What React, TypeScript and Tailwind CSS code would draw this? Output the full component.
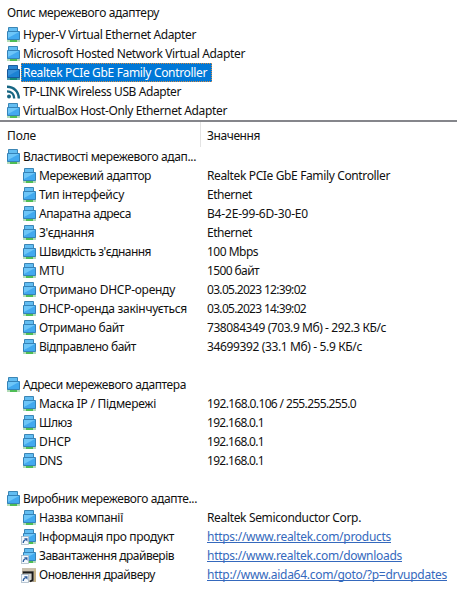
import { useLayoutEffect, useRef } from "react";

type Icon = "net" | "selected" | "wifi" | "link" | "aida";
type Row = { icon: Icon; label: string; w: number; group?: boolean; value?: string; vw?: number; link?: boolean };

function Label({ text, w, className = "" }: { text: string; w: number; className?: string }) {
  const ref = useRef<HTMLSpanElement>(null);
  useLayoutEffect(() => {
    const el = ref.current;
    if (!el) return;
    el.style.letterSpacing = "0px";
    const natural = el.getBoundingClientRect().width;
    el.style.letterSpacing = `${(w - natural) / text.length}px`;
  }, [text, w]);
  return <span ref={ref} className={`shrink-0 whitespace-pre ${className}`}>{text}</span>;
}

function Shortcut() {
  return (
    <g>
      <rect x=".5" y="7.5" width="7" height="8" fill="#f4f8fd" stroke="#a9b8c6" strokeWidth=".8" />
      <path d="M2.2 14c0-2 .8-2.8 2.4-3.4" fill="none" stroke="#2c5d9e" strokeWidth="1.3" />
      <path d="M3 9.3h3.5v3.5z" fill="#2c5d9e" />
    </g>
  );
}

function DeviceIcon({ kind }: { kind: Icon }) {
  if (kind === "wifi")
    return (
      <svg viewBox="0 0 16 16" className="size-4 shrink-0" fill="none" stroke="#176683" strokeWidth="2.4">
        <circle cx="4" cy="12.4" r="2" fill="#176683" stroke="none" />
        <path d="M2 7.4c4.3 0 7.2 2.9 7.2 7.2M2 2.8c7 0 11.8 4.8 11.8 11.8" />
      </svg>
    );
  if (kind === "aida")
    return (
      <svg viewBox="0 0 16 16" className="size-4 shrink-0">
        <path d="M1 1h14v14H1z" fill="#9c9588" />
        <path d="M1 1h14v3H1z" fill="#c9c0ae" />
        <path d="M2 5.5h9.5V13L9 14.5" fill="#d4d4d0" stroke="#1b1b1b" strokeWidth="1.8" />
        <path d="M14 2v13" stroke="#d0b987" strokeWidth="1.6" />
        <Shortcut />
      </svg>
    );
  const dark = kind === "selected";
  return (
    <svg viewBox="0 0 16 16" className="size-4 shrink-0">
      <path d="M2 12h13v3H2z" fill={dark ? "#4a9fb0" : "#b3dcb8"} />
      <path d="M5 13h7v2H5z" fill={dark ? "#168a78" : "#4fbd55"} />
      <path d="M3.5.5h9v5h-9z" fill={dark ? "#2a85d0" : "#62bdf2"} stroke={dark ? "#1c5f9f" : "#3c86b5"} />
      <path d="M2.5 4.5h12v8h-12z" fill={dark ? "#1c82d4" : "#42a9ef"} stroke={dark ? "#17599b" : "#3583b8"} />
      <path d="M3 5h11L3 11z" fill={dark ? "#3994dc" : "#6dc6f8"} />
      {kind === "link" && <Shortcut />}
    </svg>
  );
}

const adapters: Row[] = [
  { icon: "net", label: "Hyper-V Virtual Ethernet Adapter", w: 173 },
  { icon: "net", label: "Microsoft Hosted Network Virtual Adapter", w: 222 },
  { icon: "selected", label: "Realtek PCIe GbE Family Controller", w: 184 },
  { icon: "wifi", label: "TP-LINK Wireless USB Adapter", w: 158 },
  { icon: "net", label: "VirtualBox Host-Only Ethernet Adapter", w: 204 },
];

const sections: Row[][] = [
  [
    { icon: "net", label: "Властивості мережевого адап...", w: 173, group: true },
    { icon: "net", label: "Мережевий адаптор", w: 112, value: "Realtek PCIe GbE Family Controller", vw: 183 },
    { icon: "net", label: "Тип інтерфейсу", w: 85, value: "Ethernet", vw: 45 },
    { icon: "net", label: "Апаратна адреса", w: 92, value: "B4-2E-99-6D-30-E0", vw: 101 },
    { icon: "net", label: "З'єднання", w: 55, value: "Ethernet", vw: 45 },
    { icon: "net", label: "Швидкість з'єднання", w: 112, value: "100 Mbps", vw: 51 },
    { icon: "net", label: "MTU", w: 25, value: "1500 байт", vw: 52 },
    { icon: "net", label: "Отримано DHCP-оренду", w: 136, value: "03.05.2023 12:39:02", vw: 99 },
    { icon: "net", label: "DHCP-оренда закінчується", w: 148, value: "03.05.2023 14:39:02", vw: 99 },
    { icon: "net", label: "Отримано байт", w: 85, value: "738084349 (703.9 Мб) - 292.3 КБ/с", vw: 179 },
    { icon: "net", label: "Відправлено байт", w: 97, value: "34699392 (33.1 Мб) - 5.9 КБ/с", vw: 155 },
  ],
  [
    { icon: "net", label: "Адреси мережевого адаптера", w: 163, group: true },
    { icon: "net", label: "Маска IP / Підмережі", w: 117, value: "192.168.0.106 / 255.255.255.0", vw: 149 },
    { icon: "net", label: "Шлюз", w: 33, value: "192.168.0.1", vw: 57 },
    { icon: "net", label: "DHCP", w: 32, value: "192.168.0.1", vw: 57 },
    { icon: "net", label: "DNS", w: 23, value: "192.168.0.1", vw: 57 },
  ],
  [
    { icon: "net", label: "Виробник мережевого адапте...", w: 174, group: true },
    { icon: "net", label: "Назва компанії", w: 84, value: "Realtek Semiconductor Corp.", vw: 154 },
    { icon: "link", label: "Інформація про продукт", w: 135, value: "https://www.realtek.com/products", vw: 184, link: true },
    { icon: "link", label: "Завантаження драйверів", w: 135, value: "https://www.realtek.com/downloads", vw: 195, link: true },
    { icon: "aida", label: "Оновлення драйверу", w: 116, value: "http://www.aida64.com/goto/?p=drvupdates", vw: 240, link: true },
  ],
];

export default function App() {
  return (
    <main className="h-[594px] w-[457px] overflow-hidden bg-white font-['Noto_Sans','Open_Sans',sans-serif] text-[12px] leading-[19px] text-[#111]">
      <header className="flex h-[25px] items-center pl-[7px]">
        <Label text="Опис мережевого адаптеру" w={152} />
      </header>
      <section className="h-[95px]">
        {adapters.map((row) => (
          <div key={row.label} className="flex h-[19px] items-center pl-[5px]">
            <DeviceIcon kind={row.icon} />
            <div className={row.icon === "selected" ? "flex h-[19px] w-[191px] items-center border border-dotted border-[#d58b45] bg-[#0078d7] pl-px text-white" : "flex pl-[2px]"}>
              <Label text={row.label} w={row.w} />
            </div>
          </div>
        ))}
      </section>
      <div className="h-[2px] bg-[#85868b]" />
      <header className="flex h-[25px]">
        <div className="flex w-[201px] items-center border-r border-[#e3e3e3] pl-[7px] pt-px">
          <Label text="Поле" w={29} />
        </div>
        <div className="flex items-center pl-[6px] pt-px"><Label text="Значення" w={53} /></div>
      </header>
      <div className="flex flex-col gap-[19px]">
        {sections.map((rows) => (
          <section key={rows[0].label}>
            {rows.map((row) => (
              <div key={row.label} className="flex h-[19px] items-center">
                <div className={row.group ? "flex w-[207px] items-center gap-[2px] pl-[5px]" : "flex w-[207px] items-center gap-[2px] pl-[21px]"}>
                  <DeviceIcon kind={row.icon} />
                  <Label text={row.label} w={row.w} />
                </div>
                {row.value && (
                  <Label text={row.value} w={row.vw ?? 0} className={row.link ? "text-[#3569bd] underline underline-offset-1 [text-decoration-skip-ink:none]" : ""} />
                )}
              </div>
            ))}
          </section>
        ))}
      </div>
    </main>
  );
}
